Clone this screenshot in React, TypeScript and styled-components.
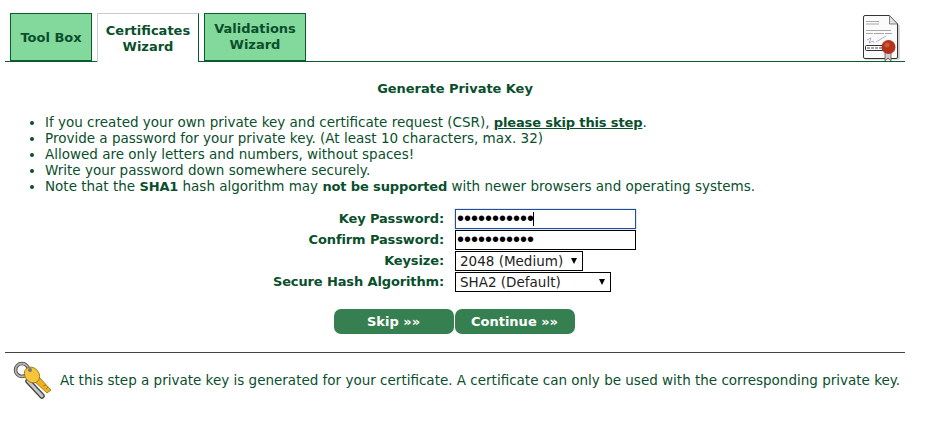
import React from 'react'
import styled, { createGlobalStyle } from 'styled-components'

const GlobalStyle = createGlobalStyle`
  html, body {
    margin: 0;
    background: #fff;
  }
  body {
    font-family: "DejaVu Sans", Verdana, sans-serif;
    font-size: 13.5px;
    color: #0a4f2c;
  }
`

const tabs = [
  { label: 'Tool Box', active: false, width: 82, nudge: 1 },
  { label: 'Certificates Wizard', active: true, width: 102, nudge: 1 },
  { label: 'Validations Wizard', active: false, width: 102, nudge: 0 },
]

function CertificateIcon() {
  return (
    <svg width="38" height="46" viewBox="0 0 38 46">
      <path d="M2 2Q2 1 3 1H28L37 10V43Q37 44 36 44H3Q2 44 2 43Z" fill="#d0d0d0" transform="translate(0.800 0.800)" />
      <path d="M1.500 2Q1.500 0.500 3 0.500H27.500L35.500 9V42Q35.500 43.500 34 43.500H3Q1.500 43.500 1.500 42Z" fill="#fbfbfb" stroke="#333" strokeWidth="1" />
      <path d="M27.500 0.500V9H35.500Z" fill="#e2e2e2" stroke="#666" strokeWidth="0.800" />
      <path d="M4 6.500H17M4 9H17M4 15.500H29M4 18.500H11M12 18.500H22M23 18.500H30" stroke="#a8a8a8" strokeWidth="1" />
      <path d="M5 25L9 23L7 28L11 26L12 28M14 27L24 21" stroke="#9a9ab8" strokeWidth="0.800" fill="none" />
      <rect x="3.500" y="30.500" width="20" height="5" rx="1" fill="#fff" stroke="#333" />
      <path d="M5 33H21" stroke="#888" strokeWidth="1.500" strokeDasharray="3 1" />
      <path d="M23 37L23 46L26 43L29 46L29 37Z" fill="#d8c8d8" stroke="#554" strokeWidth="0.800" />
      <circle cx="26.500" cy="32" r="7" fill="#b0351c" />
      <circle cx="25" cy="30" r="2.500" fill="#d4563a" />
    </svg>
  )
}

function KeysIcon() {
  return (
    <svg width="40" height="40" viewBox="0 0 40 40">
      <path d="M15 21L29 36" stroke="#444" strokeWidth="5.500" strokeLinecap="round" />
      <path d="M15 21L29 36" stroke="#c6c6c6" strokeWidth="3" strokeLinecap="round" />
      <circle cx="9" cy="10" r="6.500" fill="none" stroke="#444" strokeWidth="3.500" />
      <circle cx="9" cy="10" r="6.500" fill="none" stroke="#b4b4b4" strokeWidth="1.800" />
      <path d="M21 21L34 33L38 30L26 17Z" fill="#efb21f" stroke="#8f6a10" strokeWidth="0.800" />
      <path d="M30 26L33 25M33 29L35 27" stroke="#8f6a10" strokeWidth="0.800" />
      <ellipse cx="19" cy="15" rx="7" ry="8.500" transform="rotate(-40 19 15)" fill="#f5c63c" stroke="#8f6a10" strokeWidth="0.800" />
      <circle cx="17" cy="10" r="2" fill="#777" />
    </svg>
  )
}

export default function App(): React.JSX.Element {
  const notes = [
    <>
      If you created your own private key and certificate request (CSR), <SkipLink href="#">please skip this step</SkipLink>.
    </>,
    <>Provide a password for your private key. (At least 10 characters, max. 32)</>,
    <>Allowed are only letters and numbers, without spaces!</>,
    <>Write your password down somewhere securely.</>,
    <>
      Note that the <Strong>SHA1</Strong> hash algorithm may <Strong>not be supported</Strong> with newer browsers and operating systems.
    </>,
  ]

  return (
    <Page>
      <GlobalStyle />
      <Header>
        <TabRow>
          {tabs.map((tab) => (
            <Tab key={tab.label} $active={tab.active} $width={tab.width} $nudge={tab.nudge}>
              {tab.label}
            </Tab>
          ))}
        </TabRow>
        <HeaderIcon>
          <CertificateIcon />
        </HeaderIcon>
      </Header>

      <Title>Generate Private Key</Title>

      <NoteList>
        {notes.map((note, index) => (
          <li key={index}>{note}</li>
        ))}
      </NoteList>

      <KeyForm>
        <Label>Key Password:</Label>
        <CaretWrap>
          <TextInput type="password" defaultValue="abcdefghijk" $focused />
        </CaretWrap>
        <Label>Confirm Password:</Label>
        <TextInput type="password" defaultValue="abcdefghijk" />
        <Label>Keysize:</Label>
        <FakeSelect $width={128}>2048 (Medium)</FakeSelect>
        <Label>Secure Hash Algorithm:</Label>
        <FakeSelect $width={156}>SHA2 (Default)</FakeSelect>
      </KeyForm>

      <Buttons>
        <ActionButton>Skip »»</ActionButton>
        <ActionButton>Continue »»</ActionButton>
      </Buttons>

      <Divider />

      <Footer>
        <KeysIcon />
        <span>At this step a private key is generated for your certificate. A certificate can only be used with the corresponding private key.</span>
      </Footer>
    </Page>
  )
}

const Page = styled.div`
  width: 900px;
  margin-left: 5px;
`

const Header = styled.div`
  padding: 13px 0 0 5px;
  height: 48px;
  border-bottom: 1px solid #0a5c2e;
  display: flex;
  justify-content: space-between;
`

const TabRow = styled.div`
  display: flex;
  gap: 5px;
`

const Tab = styled.div<{ $active: boolean; $width: number; $nudge: number }>`
  width: ${(p) => p.$width}px;
  height: ${(p) => (p.$active ? 49 : 48)}px;
  box-sizing: border-box;
  display: flex;
  align-items: center;
  justify-content: center;
  text-align: center;
  font-weight: bold;
  font-size: 13px;
  line-height: 16px;
  padding: ${(p) => p.$nudge}px 6px 0;
  color: #0a4f2c;
  background: ${(p) => (p.$active ? '#fff' : '#83d89c')};
  border: 1px solid #0a5c2e;
  border-bottom: ${(p) => (p.$active ? 'none' : '1px solid #0a5c2e')};
  ${(p) => p.$active && 'border-left-color: #c5ced6; border-top-color: #c5ced6;'}
`

const HeaderIcon = styled.div`
  margin-right: 5px;
  margin-top: 2px;
  height: 46px;
`

const Title = styled.h1`
  margin: 19px 0 0;
  font-size: 13px;
  letter-spacing: -0.05px;
  line-height: 16px;
  font-weight: bold;
  text-align: center;
`

const NoteList = styled.ul`
  margin: 17px 0 0;
  padding: 0 0 0 40px;
  line-height: 16px;
`

const Strong = styled.b`
  font-size: 13px;
  line-height: 1;
  letter-spacing: -0.13px;
`

const SkipLink = styled.a`
  font-size: 13px;
  line-height: 1;
  letter-spacing: -0.13px;
  font-weight: bold;
  color: #0a4f2c;
  text-decoration: underline;
`

const KeyForm = styled.div`
  margin-top: 14px;
  display: grid;
  grid-template-columns: 439px auto;
  grid-auto-rows: 21px;
  column-gap: 11px;
  align-items: center;
`

const Label = styled.label`
  font-size: 13px;
  letter-spacing: -0.13px;
  font-weight: bold;
  text-align: right;
`

const CaretWrap = styled.div`
  position: relative;
  height: 20px;

  &::after {
    content: '';
    position: absolute;
    left: 78px;
    top: 3px;
    width: 1px;
    height: 14px;
    background: #000;
  }
`

const TextInput = styled.input<{ $focused?: boolean }>`
  display: block;
  width: 181px;
  height: 20px;
  box-sizing: border-box;
  padding: 0 1px;
  border: 1px solid #000;
  outline: none;
  font-family: "Liberation Sans", Arial, sans-serif;
  font-size: 20px;
  ${(p) => p.$focused && 'border-color: #1f4f9c; box-shadow: 0 0 1px #4a78c8;'}
`

const FakeSelect = styled.div<{ $width: number }>`
  width: ${(p) => p.$width}px;
  height: 20px;
  box-sizing: border-box;
  border: 1px solid #000;
  padding-left: 4px;
  line-height: 18px;
  color: #222;
  position: relative;

  &::after {
    content: '';
    position: absolute;
    right: 5px;
    top: 6px;
    border-left: 3px solid transparent;
    border-right: 3px solid transparent;
    border-top: 6px solid #000;
  }
`

const Buttons = styled.div`
  margin-top: 17px;
  margin-left: -2px;
  display: flex;
  justify-content: center;
  gap: 1px;
`

const ActionButton = styled.button`
  width: 120px;
  height: 25px;
  padding: 0;
  border: none;
  border-radius: 7px;
  background: #357f50;
  color: #fff;
  font-family: "DejaVu Sans", Verdana, sans-serif;
  font-size: 13px;
  font-weight: bold;
`

const Divider = styled.hr`
  margin: 18px 0 0;
  border: none;
  border-top: 1px solid #444;
`

const Footer = styled.div`
  margin-top: 7px;
  padding-left: 8px;
  display: flex;
  align-items: center;
  gap: 7px;
  white-space: nowrap;
`
